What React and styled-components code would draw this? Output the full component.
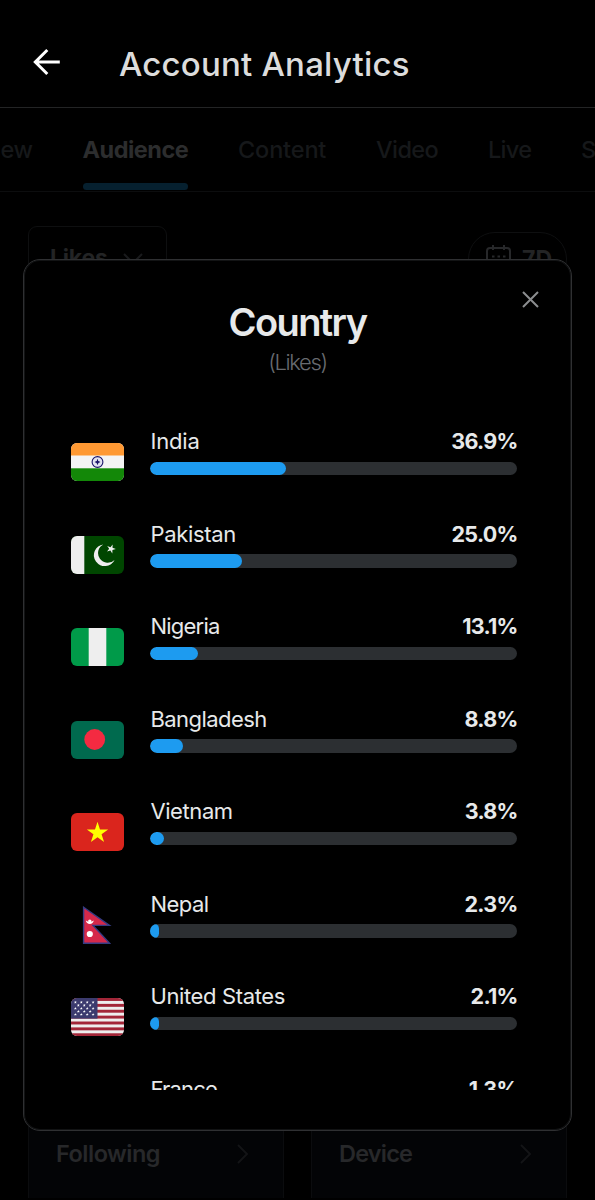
import React from "react";
import styled, { createGlobalStyle } from "styled-components";

const GlobalStyle = createGlobalStyle`
  * { box-sizing: border-box; }
  body { margin: 0; background: #000; }
`;

const Screen = styled.div`
  position: relative;
  width: 595px;
  height: 1200px;
  overflow: hidden;
  display: flex;
  flex-direction: column;
  background: #000;
  color: #e7e9ea;
  font-family: Inter, "Liberation Sans", sans-serif;
`;

const Header = styled.header`
  flex: none;
  display: flex;
  align-items: center;
  height: 108px;
  padding: 20px 0 0 33px;
  border-bottom: 1px solid #232425;
`;

const BackButton = styled.button`
  display: flex;
  width: 27px;
  margin: -4px 59px 0 0;
  padding: 0;
  border: 0;
  background: none;
`;

const HeaderTitle = styled.h1`
  margin: 0;
  font-size: 33px;
  line-height: 40px;
  font-weight: 500;
  letter-spacing: 0.2px;
  white-space: nowrap;
  color: #dcdcdc;
`;

const Tabs = styled.nav`
  flex: none;
  display: flex;
  gap: 50px;
  height: 84px;
  margin-left: -78px;
  border-bottom: 1px solid #0c0d0e;
`;

const Tab = styled.div`
  flex: none;
  display: flex;
  flex-direction: column;
  justify-content: space-between;
  width: ${(p) => p.$width}px;
  padding: 27px 0 1px;
  font-size: 23.5px;
  line-height: 30px;
  font-weight: ${(p) => (p.$active ? 700 : 500)};
  letter-spacing: ${(p) => p.$tracking || 0}px;
  text-align: ${(p) => p.$align || "left"};
  white-space: nowrap;
  color: ${(p) => (p.$active ? "#2c2d2e" : "#16181a")};
`;

const TabIndicator = styled.span`
  height: 7px;
  border-radius: 4px;
  background: #06202f;
`;

const Content = styled.main`
  flex: 1;
  display: flex;
  flex-direction: column;
  justify-content: space-between;
  padding: 34px 28px 2px;
`;

const Filters = styled.div`
  display: flex;
  justify-content: space-between;
  align-items: flex-start;
  color: #232425;
  font-size: 23px;
  font-weight: 700;
  line-height: 30px;
`;

const MetricSelect = styled.div`
  display: flex;
  gap: 15px;
  width: 139px;
  height: 66px;
  padding: 16px 0 0 21px;
  border: 1px solid #0e0f10;
  border-radius: 9px;
  letter-spacing: -0.2px;
`;

const RangePill = styled.div`
  display: flex;
  gap: 10px;
  width: 99px;
  height: 54px;
  margin-top: 6px;
  padding: 11px 0 0 17px;
  border: 1px solid #0e0f10;
  border-radius: 27px;
`;

const LinkCards = styled.div`
  display: grid;
  grid-template-columns: 256px 256px;
  justify-content: space-between;
`;

const LinkCard = styled.div`
  display: flex;
  justify-content: space-between;
  align-items: flex-end;
  height: 90px;
  padding: 0 34px 29px 27px;
  border: 1px solid #0b0c0e;
  border-width: 0 1px;
  background: #030406;
  color: #27282a;
  font-size: 23.5px;
  line-height: 30px;
  font-weight: 600;
  letter-spacing: ${(p) => p.$tracking}px;
`;

const Dialog = styled.section`
  position: absolute;
  left: 23px;
  top: 259px;
  width: 549px;
  height: 872px;
  display: flex;
  flex-direction: column;
  padding: 39px 54px 40px 47px;
  border: 1px solid #2f3032;
  border-radius: 17px;
  background: #000;
  box-shadow: inset 0 0 0 1px #121314;
`;

const CloseButton = styled.button`
  position: absolute;
  top: 31px;
  right: 32px;
  display: flex;
  padding: 0;
  border: 0;
  background: none;
`;

const DialogHeading = styled.div`
  flex: none;
  height: 128.2px;
  margin: 0 -7px 0 0;
  text-align: center;
`;

const DialogTitle = styled.h2`
  margin: 0;
  font-size: 38px;
  line-height: 46px;
  font-weight: 600;
  letter-spacing: -1.6px;
`;

const DialogSubtitle = styled.p`
  margin: 3px 0 0;
  font-size: 22px;
  line-height: 28px;
  font-weight: 300;
  letter-spacing: -1.4px;
  color: #686b70;
`;

const CountryList = styled.div`
  flex: 1;
  min-height: 0;
  overflow: hidden;
`;

const CountryRow = styled.div`
  display: flex;
  gap: 26.4px;
  height: 92.55px;
`;

const FlagFrame = styled.div`
  flex: none;
  width: 53px;
  height: 38px;
  margin-top: 15.8px;
  overflow: hidden;
  border-radius: ${(p) => (p.$plain ? 0 : 6)}px;
  svg { display: block; }
`;

const CountryStats = styled.div`
  flex: 1;
`;

const CountryLabel = styled.div`
  display: flex;
  justify-content: space-between;
  height: 34.5px;
  font-size: 22px;
  line-height: 28px;
`;

const CountryName = styled.span`
  letter-spacing: ${(p) => p.$tracking}px;
`;

const CountryShare = styled.span`
  margin-right: -0.7px;
  font-size: 21.5px;
  font-weight: 700;
  letter-spacing: -0.7px;
`;

const Track = styled.div`
  height: 13.3px;
  border-radius: 7px;
  overflow: hidden;
  background: #2c2f32;
`;

const Fill = styled.div`
  height: 100%;
  border-radius: 7px;
  background: #1d9bf0;
`;

const star = (cx, cy, r, rot = 0) =>
  Array.from({ length: 10 }, (_, i) => {
    const a = ((i * 36 - 90 + rot) * Math.PI) / 180;
    const q = i % 2 ? r * 0.382 : r;
    return `${(cx + q * Math.cos(a)).toFixed(2)},${(cy + q * Math.sin(a)).toFixed(2)}`;
  }).join(" ");

const usStars = [];
for (let row = 0; row < 5; row++) {
  const odd = row % 2;
  for (let col = 0; col < (odd ? 3 : 4); col++) {
    usStars.push([4.4 + col * 5.9 + odd * 2.95, 4.3 + row * 3.05]);
  }
}

const flags = {
  India: (
    <>
      <rect width="53" height="38" fill="#f4f4f4" />
      <rect width="53" height="12.5" fill="#ff9933" />
      <rect y="25.3" width="53" height="13" fill="#138808" />
      <circle cx="26.5" cy="19" r="5.4" fill="#e2e2f0" stroke="#1a1469" strokeWidth="1.1" />
      <path d="M26.5 16.4v5.2M23.9 19h5.2" stroke="#1a1469" strokeWidth="1" />
      <circle cx="26.5" cy="19" r="1.5" fill="#1a1469" />
    </>
  ),
  Pakistan: (
    <>
      <rect width="53" height="38" fill="#004600" />
      <rect width="13.3" height="38" fill="#eee" />
      <path d="M32.3 8.4A10.9 10.9 0 1 0 43.6 23.9A9.7 9.7 0 1 1 32.3 8.4Z" fill="#eee" />
      <polygon points={star(40, 12.9, 4.8, 20)} fill="#eee" />
    </>
  ),
  Nigeria: (
    <>
      <rect width="53" height="38" fill="#009a49" />
      <rect x="17.7" width="17.6" height="38" fill="#eee" />
    </>
  ),
  Bangladesh: (
    <>
      <rect width="53" height="38" fill="#006a4e" />
      <circle cx="23.7" cy="18.5" r="10.4" fill="#f42a41" />
    </>
  ),
  Vietnam: (
    <>
      <rect width="53" height="38" fill="#da251d" />
      <polygon points={star(26.5, 20, 11.2)} fill="#ff0" />
    </>
  ),
  Nepal: (
    <>
      <path d="M12.6 1.2L38.4 19.4H22L38.6 37.2H12.6Z" fill="#d5284a" stroke="#343b83" strokeWidth="1.4" />
      <circle cx="18.8" cy="28" r="3.1" fill="#fff" />
      <path d="M14.8 14.6Q18.8 17.4 22.8 14.6Q22 18 18.8 18Q15.6 18 14.8 14.6Z" fill="#fff" />
      <circle cx="18.8" cy="15.1" r="1.7" fill="#fff" />
    </>
  ),
  "United States": (
    <>
      <rect width="53" height="38" fill="#eee" />
      {[0, 1, 2, 3, 4, 5, 6].map((i) => (
        <rect key={i} y={i * 5.88} width="53" height="2.94" fill="#a32638" />
      ))}
      <rect width="26.5" height="20.6" fill="#3c3b6e" />
      {usStars.map(([x, y], i) => (
        <polygon key={i} points={star(x, y, 1.6)} fill="#fff" />
      ))}
    </>
  ),
};

const countries = [
  { name: "India", share: "36.9%", tracking: -0.15, bar: 135.7 },
  { name: "Pakistan", share: "25.0%", tracking: -0.3, bar: 91.8 },
  { name: "Nigeria", share: "13.1%", tracking: -0.75, bar: 48 },
  { name: "Bangladesh", share: "8.8%", tracking: -0.55, bar: 32.4 },
  { name: "Vietnam", share: "3.8%", tracking: -0.4, bar: 14 },
  { name: "Nepal", share: "2.3%", tracking: -0.5, bar: 8.5 },
  { name: "United States", share: "2.1%", tracking: -0.37, bar: 8.5 },
  { name: "France", share: "1.3%", tracking: -0.8, bar: 5 },
];

const Chevron = ({ d, width, height, color }) => (
  <svg width={width} height={height} fill="none" stroke={color} strokeWidth="2">
    <path d={d} />
  </svg>
);

export default function App() {
  return (
    <Screen>
      <GlobalStyle />
      <Header>
        <BackButton aria-label="Back">
          <svg width="27" height="28" fill="none" stroke="#fff" strokeWidth="3">
            <path d="M26.8 14H2.5M14.3 2L2.3 14L14.3 26" />
          </svg>
        </BackButton>
        <HeaderTitle>Account Analytics</HeaderTitle>
      </Header>

      <Tabs>
        <Tab $width={110.5} $align="right" $tracking={-0.4}>Overview</Tab>
        <Tab $width={105.5} $active $tracking={-0.5}>
          Audience
          <TabIndicator />
        </Tab>
        <Tab $width={88} $tracking={-0.15}>Content</Tab>
        <Tab $width={62} $tracking={-0.6}>Video</Tab>
        <Tab $width={43} $tracking={-0.7}>Live</Tab>
        <Tab $width={80}>Spaces</Tab>
      </Tabs>

      <Content>
        <Filters>
          <MetricSelect>
            Likes
            <Chevron d="M1 11L10 20L19 11" width={20} height={30} color="#191a1c" />
          </MetricSelect>
          <RangePill>
            <svg width="26" height="30" fill="none" stroke="#27282a" strokeWidth="2">
              <rect x="1" y="4" width="23" height="23" rx="3" />
              <path d="M7 1v5M18 1v5" />
              <path d="M6 12.5h2.5M11.5 12.5h2.5M17 12.5h2.5M6 18.5h2.5M11.5 18.5h2.5M17 18.5h2.5" />
            </svg>
            7D
          </RangePill>
        </Filters>
        <LinkCards>
          <LinkCard $tracking={-0.5}>
            Following
            <Chevron d="M2 6L11 15L2 24" width={13} height={30} color="#131416" />
          </LinkCard>
          <LinkCard $tracking={-0.8}>
            Device
            <Chevron d="M2 6L11 15L2 24" width={13} height={30} color="#131416" />
          </LinkCard>
        </LinkCards>
      </Content>

      <Dialog role="dialog">
        <CloseButton aria-label="Close">
          <svg width="17" height="17" fill="none" stroke="#8b8d8f" strokeWidth="2">
            <path d="M1 1L16 16M16 1L1 16" />
          </svg>
        </CloseButton>
        <DialogHeading>
          <DialogTitle>Country</DialogTitle>
          <DialogSubtitle>(Likes)</DialogSubtitle>
        </DialogHeading>
        <CountryList>
          {countries.map((c) => (
            <CountryRow key={c.name}>
              <FlagFrame $plain={c.name === "Nepal"}>
                {flags[c.name] && (
                  <svg width="53" height="38" viewBox="0 0 53 38">
                    {flags[c.name]}
                  </svg>
                )}
              </FlagFrame>
              <CountryStats>
                <CountryLabel>
                  <CountryName $tracking={c.tracking}>{c.name}</CountryName>
                  <CountryShare>{c.share}</CountryShare>
                </CountryLabel>
                <Track>
                  <Fill style={{ width: c.bar }} />
                </Track>
              </CountryStats>
            </CountryRow>
          ))}
        </CountryList>
      </Dialog>
    </Screen>
  );
}
